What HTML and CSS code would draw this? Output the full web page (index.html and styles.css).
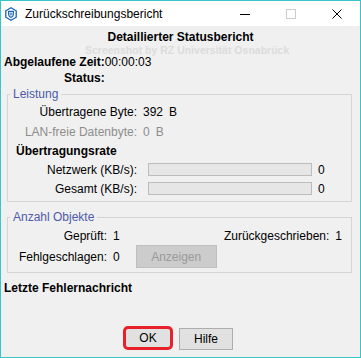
FILE: index.html
```html
<!DOCTYPE html>
<html lang="de">
<head>
    <meta charset="UTF-8">
    <title>Zurückschreibungsbericht</title>
    <link rel="stylesheet" href="styles.css">
</head>
<body>
    <div class="window">
        <div class="titlebar">
            <svg class="app-icon" width="12" height="14" viewBox="0 0 12 14">
                <polygon points="6,0.8 11.2,3.8 11.2,10.2 6,13.2 0.8,10.2 0.8,3.8" fill="none" stroke="#1763ad" stroke-width="1.3"/>
                <path d="M3.6 4.4 H8.4 V7.6 C8.4 9.4 6 10.4 6 10.4 C6 10.4 3.6 9.4 3.6 7.6 Z" fill="none" stroke="#1763ad" stroke-width="1.1"/>
                <path d="M5.2 5.6 V8.4 M6.8 5.6 V8.4" stroke="#1763ad" stroke-width="0.9"/>
            </svg>
            <span class="title">Zurückschreibungsbericht</span>
            <div class="controls">
                <span class="ctl">
                    <svg width="10" height="10" viewBox="0 0 10 10"><path d="M0 5.5 H10" stroke="#000" stroke-width="1"/></svg>
                </span>
                <span class="ctl">
                    <svg width="10" height="10" viewBox="0 0 10 10"><rect x="0.5" y="0.5" width="9" height="9" fill="none" stroke="#cccccc" stroke-width="1"/></svg>
                </span>
                <span class="ctl">
                    <svg width="10" height="10" viewBox="0 0 10 10"><path d="M0.5 0.5 L9.5 9.5 M9.5 0.5 L0.5 9.5" stroke="#000" stroke-width="1"/></svg>
                </span>
            </div>
        </div>

        <div class="content">
            <div class="watermark">Screenshot by RZ Universität Osnabrück</div>
            <h1 class="heading">Detaillierter Statusbericht</h1>

            <div class="summary">
                <span class="key">Abgelaufene Zeit:</span><span>00:00:03</span>
                <span class="key">Status:</span><span></span>
            </div>

            <fieldset class="group perf">
                <legend>Leistung</legend>
                <div class="row">
                    <span class="label">Übertragene Byte:</span>
                    <span class="amount">392</span><span class="unit">B</span>
                </div>
                <div class="row muted">
                    <span class="label">LAN-freie Datenbyte:</span>
                    <span class="amount">0</span><span class="unit">B</span>
                </div>
                <div class="rate-title">Übertragungsrate</div>
                <div class="row bar-row">
                    <span class="label">Netzwerk (KB/s):</span>
                    <span class="bar"></span><span class="bar-value">0</span>
                </div>
                <div class="row bar-row">
                    <span class="label">Gesamt (KB/s):</span>
                    <span class="bar"></span><span class="bar-value">0</span>
                </div>
            </fieldset>

            <fieldset class="group objects">
                <legend>Anzahl Objekte</legend>
                <div class="obj-row first">
                    <span class="obj-label">Geprüft:</span>
                    <span class="obj-value">1</span>
                    <span class="spacer"></span>
                    <span>Zurückgeschrieben:</span>
                    <span class="obj-value">1</span>
                </div>
                <div class="obj-row second">
                    <span class="obj-label">Fehlgeschlagen:</span>
                    <span class="obj-value">0</span>
                    <button class="btn disabled" disabled>Anzeigen</button>
                </div>
            </fieldset>

            <div class="last-error">Letzte Fehlernachricht</div>

            <div class="footer">
                <button class="btn ok">OK</button>
                <button class="btn">Hilfe</button>
            </div>
        </div>
    </div>
</body>
</html>
```

FILE: styles.css
```css
body {
    margin: 0;
    font-family: "Liberation Sans", Arial, sans-serif;
    font-size: 12px;
    color: #000;
    background: #f0f0f0;
}
.window {
    width: 361px;
    height: 358px;
    box-sizing: border-box;
    border: 1px solid #3ac4ca;
    background: #f0f0f0;
    display: flex;
    flex-direction: column;
}
.titlebar {
    height: 25px;
    flex-shrink: 0;
    background: #fff;
    display: flex;
    align-items: center;
}
.app-icon {
    margin-left: 4px;
}
.title {
    margin-left: 8px;
    line-height: 14px;
}
.controls {
    margin-left: auto;
    display: flex;
    height: 100%;
}
.ctl {
    width: 46px;
    display: flex;
    align-items: center;
    justify-content: center;
}
.content {
    flex: 1;
    display: flex;
    flex-direction: column;
    position: relative;
}
.watermark {
    position: absolute;
    top: 20px;
    left: 84px;
    font-size: 10.5px;
    line-height: 9px;
    font-weight: bold;
    color: #dcdcdc;
    white-space: nowrap;
}
.heading {
    margin: 4px 0 0;
    font-size: 12px;
    line-height: 14px;
    text-align: center;
    font-weight: bold;
}
.summary {
    margin-top: 10px;
    padding-left: 3px;
    display: grid;
    grid-template-columns: max-content 1fr;
    line-height: 16px;
}
.summary .key {
    font-weight: bold;
    text-align: right;
}
.group {
    margin: 1px 8px 0 6px;
    border: 1px solid #d5d5d5;
    padding: 1px 0 3px;
    min-width: 0;
}
.group legend {
    margin-left: 2px;
    padding: 0 3px;
    line-height: 14px;
    color: #4d5ba8;
}
.row {
    height: 20px;
    display: flex;
    align-items: center;
    line-height: 14px;
}
.label {
    width: 129px;
    text-align: right;
    flex-shrink: 0;
}
.amount {
    margin-left: 6px;
}
.unit {
    margin-left: 6px;
}
.muted {
    color: #8d8d8d;
}
.rate-title {
    height: 18px;
    line-height: 18px;
    padding-left: 8px;
    font-weight: bold;
}
.bar-row {
    height: 19px;
}
.bar {
    margin-left: 11px;
    width: 164px;
    height: 13px;
    box-sizing: border-box;
    border: 1px solid #bcbcbc;
    background: #e6e6e6;
}
.bar-value {
    margin-left: 6px;
}
.objects {
    margin-top: 8px;
    padding: 3px 9px 4px 0;
}
.obj-row {
    display: flex;
    align-items: center;
    line-height: 14px;
}
.obj-row.first {
    height: 18px;
}
.obj-row.second {
    height: 23px;
}
.obj-label {
    width: 99px;
    text-align: right;
    flex-shrink: 0;
}
.obj-value {
    margin-left: 6px;
}
.spacer {
    flex: 1;
}
.btn {
    font-family: "Liberation Sans", Arial, sans-serif;
    font-size: 12px;
    background: #e1e1e1;
    border: 1px solid #adadad;
    color: #000;
    height: 22px;
    padding: 0;
    margin: 0;
}
.btn.disabled {
    margin-left: 16px;
    width: 81px;
    height: 23px;
    background: #cccccc;
    border-color: #bfbfbf;
    color: #9a9a9a;
}
.last-error {
    margin-top: 8px;
    padding-left: 3px;
    line-height: 14px;
    font-weight: bold;
}
.footer {
    margin-top: auto;
    display: flex;
    justify-content: center;
    align-items: flex-end;
    gap: 6px;
    padding: 0 5px 7px 0;
}
.btn.ok {
    width: 50px;
    height: 24px;
    border: 3px solid #e8202a;
    border-radius: 5px;
}
.footer .btn:last-child {
    width: 54px;
}
```
